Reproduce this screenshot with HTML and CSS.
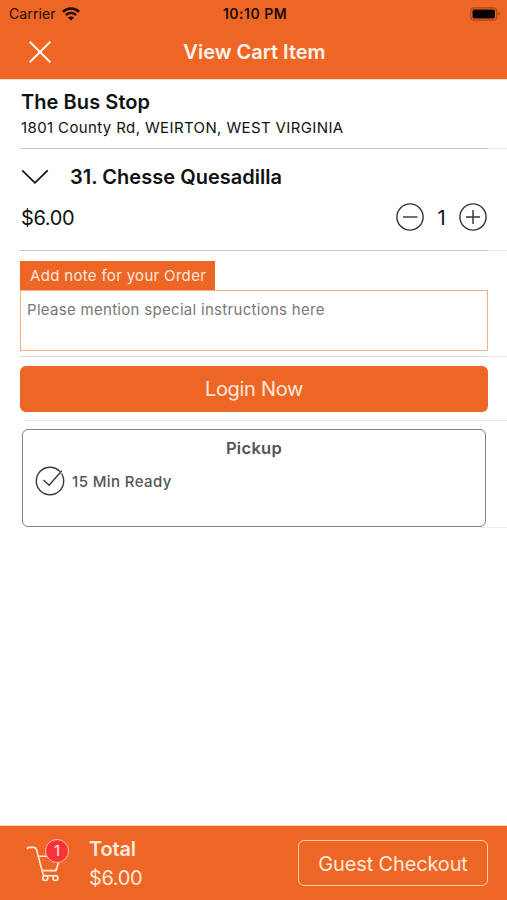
FILE: index.html
```html
<!DOCTYPE html>
<html lang="en">
<head>
<meta charset="utf-8">
<title>View Cart Item</title>
<link rel="stylesheet" href="styles.css">
</head>
<body>
<div class="screen">
  <header class="top">
    <div class="status">
      <div class="carrier"><span class="carrier-name">Carrier</span>
        <svg class="wifi" width="18" height="14" viewBox="0 0 18 14" fill="none" stroke="currentColor" stroke-width="2.5"><path d="M.9 4.9C5.5.4 12.5.4 17.1 4.9M3.9 8c3-2.8 7.2-2.8 10.2 0"/><path d="M9 13.6 5.9 10.5c1.7-1.5 4.5-1.5 6.2 0z" fill="currentColor" stroke="none"/></svg>
      </div>
      <span class="clock">10:10 PM</span>
      <svg class="battery" width="31" height="14" viewBox="0 0 31 14"><rect x=".8" y=".8" width="26" height="12.4" rx="3.5" fill="none" stroke="#a94518" stroke-width="1.2"/><rect x="2.5" y="2.5" width="22.5" height="9" rx="1.8" fill="#0a0200"/><path d="M28.3 5v4q1.7-.6 1.7-2t-1.7-2" fill="#a94518"/></svg>
    </div>
    <div class="nav">
      <svg class="close" width="24" height="24" viewBox="0 0 24 24" fill="none" stroke="#fff4ec" stroke-width="2"><path d="m1.7 1.7 20.6 20.6m0-20.6L1.7 22.3"/></svg>
      <h1 class="title">View Cart Item</h1>
    </div>
  </header>
  <main class="content">
    <section class="store row">
      <h2 class="store-name">The Bus Stop</h2>
      <p class="address">1801 County Rd, WEIRTON, WEST VIRGINIA</p>
    </section>
    <section class="item row">
      <div class="item-head">
        <svg class="chevron" width="28" height="16" viewBox="0 0 28 16" fill="none" stroke="#111" stroke-width="1.7"><path d="m1.2 1.4 12.7 12.4L26.7 1.4"/></svg>
        <h3 class="item-name">31. Chesse Quesadilla</h3>
      </div>
      <div class="item-foot">
        <span class="price">$6.00</span>
        <div class="stepper">
          <svg width="28" height="28" viewBox="0 0 28 28" fill="none" stroke="#333" stroke-width="1.4"><circle cx="14" cy="14" r="13.1"/><path d="M7 14h14.5"/></svg>
          <span class="qty">1</span>
          <svg width="28" height="28" viewBox="0 0 28 28" fill="none" stroke="#333" stroke-width="1.4"><circle cx="14" cy="14" r="13.1"/><path d="M7 14h14M14 7v14"/></svg>
        </div>
      </div>
    </section>
    <section class="note row">
      <div class="note-tab"><span class="note-label">Add note for your Order</span></div>
      <div class="note-box"><span class="note-hint">Please mention special instructions here</span></div>
    </section>
    <section class="login row">
      <div class="login-button"><span class="login-label">Login Now</span></div>
    </section>
    <section class="pickup row">
      <div class="pickup-card">
        <h4 class="pickup-title">Pickup</h4>
        <div class="ready">
          <svg width="30" height="30" viewBox="0 0 30 30" fill="none" stroke="#3a3a3a" stroke-width="1.4"><circle cx="15" cy="15" r="13.7"/><path d="M23.5 9 28 4" stroke="#fff" stroke-width="2.6"/><path d="m8.5 14 5.6 5.2L26.8 4.8"/></svg>
          <span class="ready-label">15 Min Ready</span>
        </div>
      </div>
    </section>
  </main>
  <footer class="bar">
    <div class="cart">
      <svg width="44" height="46" viewBox="0 0 44 46" fill="none" stroke="#ffe9d8" stroke-width="1.6" stroke-linecap="round" stroke-linejoin="round"><path d="M1.4 8.5q.2-1.1 1.4-1.1h5q2.1 0 2.7 2.2L17 34q.5 1.7 2.2 1.7h12"/><path d="M12.5 16.3h21.8L30 30.6H16.2"/><circle cx="19.3" cy="38" r="2.5"/><circle cx="29.4" cy="38" r="2.5"/></svg>
      <span class="badge">1</span>
    </div>
    <div class="totals">
      <span class="total-label">Total</span>
      <span class="total-price">$6.00</span>
    </div>
    <div class="checkout"><span class="checkout-label">Guest Checkout</span></div>
  </footer>
</div>
</body>
</html>
```
FILE: styles.css
```css
* { box-sizing: border-box; margin: 0; padding: 0; }
body { background: #fff; font-family: Inter, "Liberation Sans", sans-serif; color: #111; }
svg { display: block; flex: none; }
span, h1, h2, h3, h4, p { white-space: nowrap; }
.screen { width: 507px; height: 900px; display: flex; flex-direction: column; }

.top { height: 79px; background: #ee6626; flex: none; box-shadow: 0 1px #fbd8c8; }
.status { height: 27px; display: grid; grid-template-columns: 1fr auto 1fr; align-items: center; padding: 0 6px 0 9px; color: #1c0a02; }
.carrier { display: flex; align-items: center; gap: 6px; font-size: 14px; letter-spacing: .12px; }
.clock { font-size: 14px; font-weight: 600; letter-spacing: .5px; color: #1c0a02; }
.battery { justify-self: end; }
.nav { height: 50px; display: grid; grid-template-columns: 80px 1fr 78px; align-items: center; }
.close { margin-left: 28px; }
.title { text-align: center; font-size: 20px; font-weight: 600; color: #fff4ec; }

.content { flex: 1; }
.row { padding: 0 20px; background: linear-gradient(90deg, transparent 20px, #c8c8c8 20px, #c8c8c8 488px, #ececec 488px) bottom / 100% 1px no-repeat; }
.store { height: 70px; padding-top: 11px; }
.store-name { font-size: 20px; line-height: 24px; font-weight: 600; letter-spacing: .07px; margin-left: 1px; }
.address { font-size: 15px; line-height: 20px; letter-spacing: .38px; margin: 4px 0 0 1px; }
.item { height: 102px; padding-top: 14px; }
.item-head { display: flex; align-items: center; height: 28px; gap: 21px; padding-left: 1px; }
.item-name { font-size: 20px; font-weight: 600; letter-spacing: .03px; }
.item-foot { display: flex; justify-content: space-between; align-items: center; height: 28px; margin-top: 12px; padding-left: 1px; }
.price { font-size: 20px; letter-spacing: -.35px; padding-top: 2px; }
.stepper { display: flex; align-items: center; }
.qty { width: 35px; text-align: center; font-size: 20px; padding-top: 2px; }
.note { height: 106px; padding-top: 10px; background-image: linear-gradient(90deg, transparent 20px, #dadada 20px, #dadada 488px, #ececec 488px); }
.note-tab { width: 195px; height: 29px; background: #ee6626; color: #ffe9dc; font-size: 15px; line-height: 29px; letter-spacing: .32px; padding-left: 10px; }
.note-box { width: 468px; height: 61px; border: 1px solid #f2b08d; color: #777; font-size: 15px; line-height: 20px; letter-spacing: .3px; padding: 9px 0 0 6px; }
.login { height: 64px; padding-top: 9px; background-image: linear-gradient(90deg, transparent 24px, #e8e8e8 24px); }
.login-button { width: 468px; height: 46px; border-radius: 6px; background: #ee6626; color: #ffe9dc; font-size: 20px; line-height: 46px; letter-spacing: -.3px; text-align: center; }
.pickup { height: 107px; padding: 8px 0 0 22px; background-image: linear-gradient(90deg, transparent 480px, #ececec 480px); }
.pickup-card { width: 464px; height: 98px; border: 1.5px solid #808080; border-radius: 6px; color: #555; padding-top: 8px; background: #fff; }
.pickup-title { font-size: 16.5px; line-height: 20px; font-weight: 600; letter-spacing: .3px; text-align: center; }
.ready { display: flex; align-items: center; gap: 7px; margin: 8px 0 0 12px; }
.ready-label { font-size: 15px; font-weight: 500; letter-spacing: .4px; }

.bar { height: 74px; flex: none; background: #ee6626; color: #ffeadb; display: flex; align-items: center; padding: 0 19px 0 26px; box-shadow: 0 -1px #fbd8c8; }
.cart { position: relative; width: 44px; height: 46px; }
.badge { position: absolute; left: 19px; top: -1px; width: 24px; height: 24px; border: 1.5px solid #ffc3ae; border-radius: 50%; background: #fb3339; font-size: 15px; line-height: 22px; text-align: center; }
.totals { margin-left: 19px; padding-top: 2px; display: flex; flex-direction: column; flex: 1; }
.total-label { font-size: 20px; line-height: 29px; font-weight: 600; letter-spacing: -.15px; }
.total-price { font-size: 20px; line-height: 29px; letter-spacing: -.35px; }
.checkout { width: 190px; height: 46px; border: 1.5px solid #ffceaf; border-radius: 6px; font-size: 20px; line-height: 46px; letter-spacing: -.15px; text-align: center; }
```
